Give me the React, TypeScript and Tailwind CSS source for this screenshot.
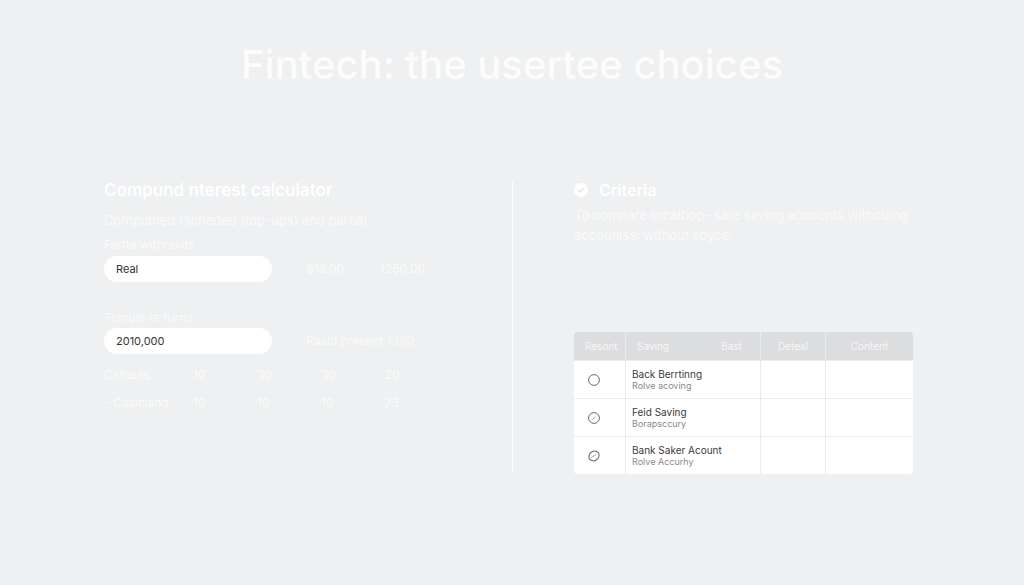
import React from 'react';

const ROWS = [
  { name: 'Back Berrtinng', sub: 'Rolve acoving', mark: 0 },
  { name: 'Feid Saving', sub: 'Borapsccury', mark: 1 },
  { name: 'Bank Saker Acount', sub: 'Rolve Accurhy', mark: 2 },
];

function Radio({ mark }: { mark: number }) {
  return (
    <svg width="14" height="14" viewBox="0 0 14 14" fill="none">
      {mark === 2 ? (
        <ellipse cx="7" cy="7" rx="5.4" ry="4.6" transform="rotate(-35 7 7)" stroke="#6b6b6b" strokeWidth="1" />
      ) : (
        <circle cx="7" cy="7" r="5.4" stroke="#6b6b6b" strokeWidth="1" />
      )}
      {mark === 1 && <path d="M4.8 8.8 L8.6 6" stroke="#8a8a8a" strokeWidth="0.8" />}
      {mark === 2 && <path d="M4.4 8.6 L9 5.6" stroke="#8a8a8a" strokeWidth="0.8" />}
    </svg>
  );
}

function StatRow({ label, values }: { label: string; values: string[] }) {
  return (
    <div className="flex items-center h-[28px] text-[12px] text-[#fbfbfb]">
      <span className="w-[89px]">{label}</span>
      {values.map((v, i) => (
        <span key={i} className="w-[64px]">{v}</span>
      ))}
    </div>
  );
}

export default function App() {
  return (
    <div
      className="w-[1024px] h-[585px] bg-[#eef0f1] overflow-hidden"
      style={{ fontFamily: 'Inter, "Noto Sans", sans-serif' }}
    >
      <h1 className="pt-[41px] text-center text-[40px] leading-[48px] font-medium text-[#fcfcfc]">
        Fintech: the usertee choices
      </h1>

      <div className="flex mt-[91px] pl-[104px]">
        {/* Calculator column */}
        <div className="w-[408px]">
          <h2 className="text-[17px] leading-[20px] font-semibold text-white">Compund nterest calculator</h2>
          <p className="mt-[10px] text-[13px] leading-[20px] text-[#fafafa]">
            Compumed (scheded (top-ups) and partial
          </p>
          <p className="mt-[6px] text-[12px] leading-[18px] text-[#fafafa]">Fartte withravits</p>
          <div className="mt-[2px] flex items-center">
            <div className="w-[168px] h-[26px] rounded-full bg-white flex items-center px-3 text-[11px] text-[#333]">
              Real
            </div>
            <span className="ml-[34px] w-[74px] text-[12px] text-[#fafafa]">$19.00</span>
            <span className="text-[12px] text-[#fafafa]">1250.00</span>
          </div>

          <p className="mt-[27px] text-[12px] leading-[18px] text-[#fafafa]">Tomule re turns.</p>
          <div className="mt-[1px] flex items-center">
            <div className="w-[168px] h-[26px] rounded-full bg-white flex items-center px-3 text-[11px] text-[#333]">
              2010,000
            </div>
            <span className="ml-[34px] text-[12px] text-[#fafafa]">Rasid present 1390</span>
          </div>

          <div className="mt-[7px]">
            <StatRow label="Caltauls" values={['10', '30', '30', '20']} />
            <StatRow label="- Caslcland" values={['10', '10', '10', '73']} />
          </div>
        </div>

        {/* Divider */}
        <div className="w-px h-[292px] bg-[#fafafa]" />

        {/* Criteria column */}
        <div className="pl-[61px] w-[420px]">
          <div className="flex items-center gap-[11px] h-[20px]">
            <svg width="14" height="14" viewBox="0 0 14 14">
              <circle cx="7" cy="7" r="7" fill="#ffffff" />
              <path d="M4.2 7.2 L6.1 9 L9.8 5.2" stroke="#e6e8ea" strokeWidth="1.6" fill="none" strokeLinecap="round" strokeLinejoin="round" />
            </svg>
            <h2 className="text-[16px] leading-[20px] font-semibold text-white">Criteria</h2>
          </div>
          <p className="mt-[5px] text-[13px] leading-[20px] text-[#fafafa] whitespace-nowrap">
            To compare tocalbop- sare saving accounts withouing
            <br />
            accounlss: without spyce.
          </p>

          <div className="mt-[87px] w-[339px] rounded-[4px] overflow-hidden bg-white text-[10px]">
            <div className="flex h-[28px] bg-[#dcdddf] text-[#f7f7f7] items-center">
              <div className="w-[51px] pl-[11px]">Resont</div>
              <div className="w-[135px] flex justify-between pl-[11px] pr-[18px] h-full items-center border-l border-[#e8e9ea]">
                <span>Saving</span>
                <span>Bast</span>
              </div>
              <div className="w-[65px] h-full flex items-center justify-center border-l border-[#e8e9ea]">Deteal</div>
              <div className="flex-1 h-full flex items-center justify-center border-l border-[#e8e9ea]">Content</div>
            </div>
            {ROWS.map((r, i) => (
              <div key={i} className="flex h-[38px] border-t border-[#ececec]">
                <div className="w-[51px] flex items-center pl-[13px]">
                  <Radio mark={r.mark} />
                </div>
                <div className="w-[135px] border-l border-[#ececec] pl-[6px] flex flex-col justify-center">
                  <span className="text-[10px] leading-[12px] text-[#3a3a3a]">{r.name}</span>
                  <span className="text-[9px] leading-[11px] text-[#8a8a8a]">{r.sub}</span>
                </div>
                <div className="w-[65px] border-l border-[#ececec]" />
                <div className="flex-1 border-l border-[#ececec]" />
              </div>
            ))}
          </div>
        </div>
      </div>
    </div>
  );
}
